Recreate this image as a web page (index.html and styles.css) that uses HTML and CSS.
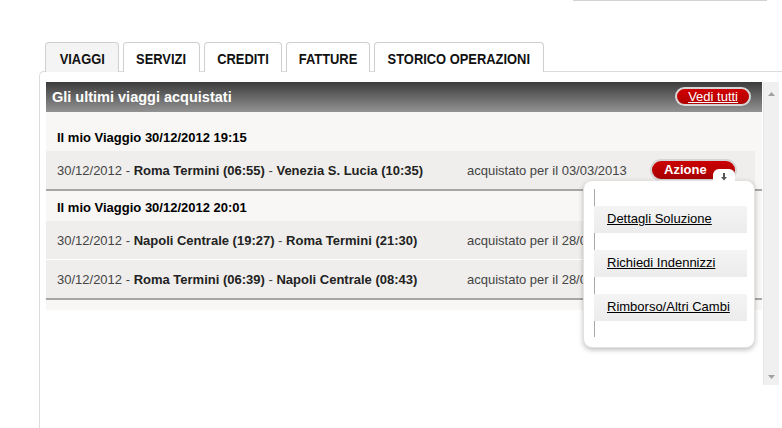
FILE: index.html
```html
<!DOCTYPE html>
<html lang="it">
<head>
    <meta charset="UTF-8">
    <meta name="viewport" content="width=device-width, initial-scale=1.0">
    <title>I miei viaggi</title>
    <link rel="stylesheet" href="styles.css">
</head>
<body>
    <div class="top-field"></div>
    <div class="tabs">
        <div class="tab tab-viaggi active"><span>VIAGGI</span></div>
        <div class="tab tab-servizi"><span>SERVIZI</span></div>
        <div class="tab tab-crediti"><span>CREDITI</span></div>
        <div class="tab tab-fatture"><span>FATTURE</span></div>
        <div class="tab tab-storico"><span>STORICO OPERAZIONI</span></div>
    </div>
    <div class="panel">
        <div class="box">
            <div class="list">
                <div class="list-header">
                    <span class="list-title">Gli ultimi viaggi acquistati</span>
                    <a href="#" class="see-all">Vedi tutti</a>
                </div>
                <div class="list-body">
                    <div class="trip">
                        <div class="trip-title">Il mio Viaggio 30/12/2012 19:15</div>
                        <div class="trip-row">
                            <span class="route">30/12/2012 - <b>Roma Termini (06:55)</b> - <b>Venezia S. Lucia (10:35)</b></span>
                            <span class="bought">acquistato per il 03/03/2013</span>
                            <div class="action">
                                <span class="action-btn">Azione</span>
                                <div class="action-menu">
                                    <span class="menu-tab">
                                        <svg width="8" height="8" viewBox="0 0 8 8"><path d="M3 0h2v4h2L4 7.5 1 4h2z" fill="#555"/></svg>
                                    </span>
                                    <ul>
                                        <li><a href="#">Dettagli Soluzione</a></li>
                                        <li><a href="#">Richiedi Indennizzi</a></li>
                                        <li><a href="#">Rimborso/Altri Cambi</a></li>
                                    </ul>
                                </div>
                            </div>
                        </div>
                    </div>
                    <div class="trip">
                        <div class="trip-title">Il mio Viaggio 30/12/2012 20:01</div>
                        <div class="trip-row">
                            <span class="route">30/12/2012 - <b>Napoli Centrale (19:27)</b> - <b>Roma Termini (21:30)</b></span>
                            <span class="bought">acquistato per il 28/02/2013</span>
                        </div>
                        <div class="trip-row">
                            <span class="route">30/12/2012 - <b>Roma Termini (06:39)</b> - <b>Napoli Centrale (08:43)</b></span>
                            <span class="bought">acquistato per il 28/02/2013</span>
                        </div>
                    </div>
                </div>
            </div>
            <div class="scrollbar">
                <svg width="7" height="4" viewBox="0 0 7 4"><path d="M0 4L3.5 0 7 4z" fill="#a0a0a0"/></svg>
                <svg width="7" height="4" viewBox="0 0 7 4"><path d="M0 0h7L3.5 4z" fill="#a0a0a0"/></svg>
            </div>
        </div>
    </div>
</body>
</html>
```

FILE: styles.css
```css
body {
    margin: 0;
    font-family: "Liberation Sans", Arial, sans-serif;
    font-size: 13px;
    color: #333;
    background: #fff;
    overflow: hidden;
}
a {
    color: inherit;
}
.top-field {
    margin-left: 573px;
    width: 194px;
    height: 1px;
    background: #d2d2d2;
}
.tabs {
    display: flex;
    gap: 4px;
    margin: 41px 0 -1px 45px;
    position: relative;
    z-index: 1;
}
.tab {
    height: 30px;
    box-sizing: border-box;
    display: flex;
    align-items: center;
    justify-content: center;
    border: 1px solid #cfcfcf;
    border-bottom: none;
    border-radius: 4px 4px 0 0;
    background: #fff;
    font-weight: bold;
    font-size: 15px;
    color: #111;
}
/* narrow caps, like the condensed face of the original */
.tab span {
    display: inline-block;
    white-space: nowrap;
    transform: scaleX(0.86);
    margin-top: 1px;
}
.tab.active {
    background: #f4f4f4;
}
.tab-viaggi { width: 74px; }
.tab-servizi { width: 77px; }
.tab-crediti { width: 78px; }
.tab-fatture { width: 84px; }
.tab-storico { width: 170px; }
.panel {
    margin-left: 39px;
    height: 360px;
    border-top: 1px solid #dcdcdc;
    border-left: 1px solid #dcdcdc;
    border-top-left-radius: 5px;
    padding: 10px 0 0 6px;
}
.box {
    display: flex;
    align-items: flex-start;
}
.list {
    width: 716px;
}
.list-header {
    height: 30px;
    display: flex;
    align-items: center;
    justify-content: space-between;
    padding: 0 11px 0 6px;
    background: linear-gradient(#3b3b3b, #939393);
}
.list-title {
    color: #fff;
    font-weight: bold;
    font-size: 14.5px;
}
.see-all {
    color: #fff;
    background: linear-gradient(#d00000, #b00000);
    border: 2px solid #d6d6d6;
    border-radius: 11px;
    padding: 0 11px;
    line-height: 15px;
    margin-top: -2px;
}
.list-body {
    background: #f8f7f5;
    padding: 9px 0 10px;
}
.trip {
    border-bottom: 2px solid #a6a6a6;
}
.trip-title {
    height: 30px;
    box-sizing: border-box;
    padding: 9px 11px 0;
    font-weight: bold;
    color: #000;
}
.trip-row {
    height: 38px;
    margin-right: 7px;
    display: flex;
    align-items: center;
    padding-left: 11px;
    background: #efeeec;
    color: #444;
}
.trip-row + .trip-row {
    border-top: 1px solid #fff;
}
.trip-row b {
    color: #222;
}
.route {
    width: 410px;
    white-space: nowrap;
}
.bought {
    white-space: nowrap;
}
.action {
    position: relative;
    margin-left: auto;
    margin-right: 18px;
}
.action-btn {
    display: block;
    width: 87px;
    height: 22px;
    box-sizing: border-box;
    padding-left: 12px;
    line-height: 18px;
    border: 2px solid #d4d4d4;
    border-radius: 11px;
    background: linear-gradient(#cc0000, #a80000);
    color: #fff;
    font-weight: bold;
}
.action-menu {
    position: absolute;
    top: 21px;
    right: -18px;
    width: 172px;
    height: 168px;
    box-sizing: border-box;
    background: #fff;
    border: 1px solid #e2e2e2;
    border-radius: 9px;
    box-shadow: 0 2px 5px rgba(0, 0, 0, 0.25);
    z-index: 2;
}
.menu-tab {
    position: absolute;
    top: -12px;
    right: 19px;
    width: 22px;
    height: 13px;
    background: #fff;
    border-radius: 6px 6px 0 0;
    display: flex;
    justify-content: center;
    padding-top: 4px;
    box-sizing: border-box;
}
.action-menu ul {
    list-style: none;
    margin: 8px 7px 0 10px;
    padding: 17px 0 16px;
    border-left: 1px solid #a9a9a9;
    display: flex;
    flex-direction: column;
    gap: 17px;
}
.action-menu a {
    display: block;
    height: 27px;
    line-height: 25px;
    margin-left: -1px;
    padding-left: 13px;
    background: linear-gradient(#f4f4f4, #ececec);
    color: #000;
}
.scrollbar {
    width: 16px;
    height: 303px;
    box-sizing: border-box;
    margin-left: 1px;
    background: #f0f0f0;
    border-left: 1px solid #e6e6e6;
    display: flex;
    flex-direction: column;
    align-items: center;
    justify-content: space-between;
    padding: 10px 0 6px;
}
```
